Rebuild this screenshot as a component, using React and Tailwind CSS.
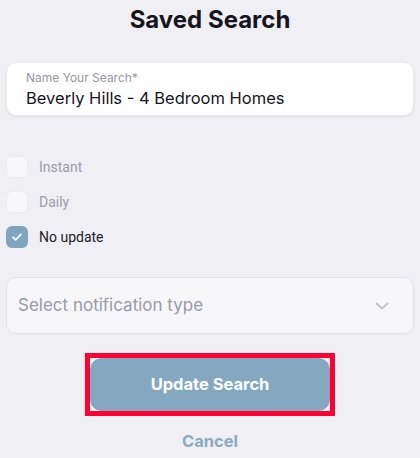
import { useState } from 'react'

const options = ['Instant', 'Daily', 'No update']

function Checkbox({ checked, label, onClick }) {
  return (
    <button onClick={onClick} className="flex items-center gap-[11px] h-[22px] text-left">
      <span
        className={`w-[22px] h-[22px] rounded-[6px] flex items-center justify-center ${
          checked ? 'bg-[#7fa6be]' : 'bg-[#f8f8fb] border border-[#ebebf0]'
        }`}
      >
        {checked && (
          <svg width="14" height="14" viewBox="0 0 14 14" fill="none">
            <path d="M3 7.2l2.6 2.6L11 4.4" stroke="#fff" strokeWidth="1.8" strokeLinecap="round" strokeLinejoin="round" />
          </svg>
        )}
      </span>
      <span className={`text-[14px] font-['Roboto',sans-serif] ${checked ? 'text-[#1c1c24]' : 'text-[#9d9ca8]'}`}>
        {label}
      </span>
    </button>
  )
}

export default function App() {
  const [frequency, setFrequency] = useState('No update')

  return (
    <div className="w-[420px] h-[458px] bg-[#f0eff4] font-['Inter',sans-serif] overflow-hidden">
      <h1 className="pt-[5px] h-[40px] text-center text-[24px] leading-[30px] font-bold text-[#16151d]">
        Saved Search
      </h1>

      {/* name field */}
      <div className="mx-[6px] mt-[22px] h-[54px] bg-white rounded-[10px] shadow-[0_1px_2px_rgba(0,0,0,0.08)] border border-[#e9e9ee] px-[19px] pt-[7px]">
        <div className="text-[12px] leading-[15px] text-[#97969f]">Name Your Search*</div>
        <div className="mt-[2px] text-[16.5px] leading-[22px] text-[#16151d]">Beverly Hills - 4 Bedroom Homes</div>
      </div>

      {/* update frequency */}
      <div className="mt-[40px] px-[6px] flex flex-col gap-[13px]">
        {options.map((opt) => (
          <Checkbox key={opt} label={opt} checked={frequency === opt} onClick={() => setFrequency(opt)} />
        ))}
      </div>

      {/* notification select */}
      <div className="mx-[6px] mt-[29px] h-[57px] bg-[#f7f7fa] border border-[#e1e1e8] rounded-[10px] flex items-center justify-between pl-[11px] pr-[24px]">
        <span className="text-[17px] text-[#9a99a6]">Select notification type</span>
        <svg width="14" height="8" viewBox="0 0 14 8" fill="none">
          <path d="M1.5 1.5L7 6.5l5.5-5" stroke="#c3c2ca" strokeWidth="1.8" strokeLinecap="round" strokeLinejoin="round" />
        </svg>
      </div>

      <div className="mt-[19px] flex flex-col items-center">
        <div className="w-[250px] h-[63px] border-[5px] border-[#ff0033] bg-[#f0eff4]">
          <button className="w-full h-full rounded-[12px] bg-[#83a8bf] text-white text-[16.5px] font-bold">
            Update Search
          </button>
        </div>
        <button className="mt-[13px] text-[16.5px] font-bold text-[#8aaac1]">Cancel</button>
      </div>
    </div>
  )
}
